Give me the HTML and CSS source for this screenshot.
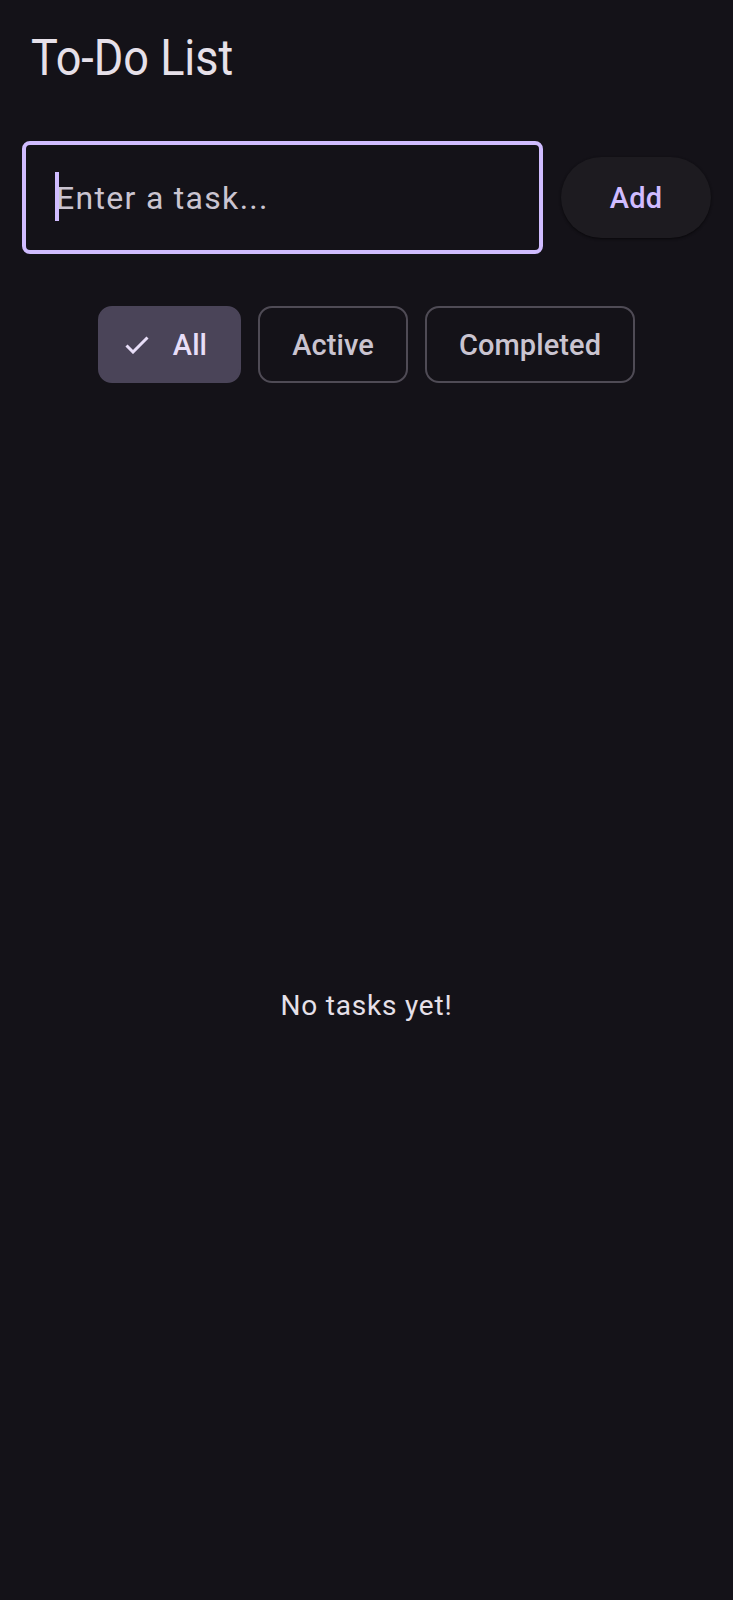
FILE: index.html
```html
<!DOCTYPE html>
<html lang="en">
<head>
<meta charset="utf-8">
<title>To-Do List</title>
<link rel="stylesheet" href="styles.css">
</head>
<body>
<main class="app">
  <h1 class="title">To-Do List</h1>
  <div class="entry">
    <div class="field">
      <span class="caret"></span>
      <span class="placeholder">Enter a task...</span>
    </div>
    <button class="add-btn" type="button">Add</button>
  </div>
  <div class="filters">
    <button class="chip chip--selected" type="button">
      <svg class="chip-check" viewBox="0 0 24 18" width="24" height="18" aria-hidden="true">
        <polyline points="1.5,9.5 8,16 22.5,1.5" fill="none" stroke="#e8def8" stroke-width="3"/>
      </svg>
      <span>All</span>
    </button>
    <button class="chip" type="button">Active</button>
    <button class="chip" type="button">Completed</button>
  </div>
  <section class="empty">
    <p class="empty-text">No tasks yet!</p>
  </section>
</main>
</body>
</html>
```
FILE: styles.css
```css
* {
  box-sizing: border-box;
}

html, body {
  margin: 0;
  padding: 0;
  background: #141218;
}

body {
  font-family: Roboto, "Noto Sans", sans-serif;
  color: #e6e0e9;
}

.app {
  min-height: 1600px;
  display: flex;
  flex-direction: column;
}

.title {
  margin: 28px 0 0 31px;
  font-size: 50px;
  font-weight: 400;
  line-height: 60px;
  color: #e6e0e9;
  transform: scaleX(0.9);
  transform-origin: left center;
}

.entry {
  margin-top: 53px;
  padding: 0 22px;
  display: flex;
  align-items: center;
  gap: 18px;
}

.field {
  position: relative;
  flex: 1;
  height: 113px;
  border: 4px solid #d0bcff;
  border-radius: 8px;
  padding-left: 30px;
  display: flex;
  align-items: center;
}

.caret {
  position: absolute;
  left: 29px;
  top: 27px;
  width: 4px;
  height: 49px;
  background: #d0bcff;
}

.placeholder {
  font-size: 32px;
  line-height: 48px;
  letter-spacing: 1.3px;
  color: #cac4d0;
}

.add-btn {
  width: 150px;
  height: 81px;
  border: none;
  border-radius: 41px;
  background: #1d1b20;
  box-shadow: 0 1px 3px rgba(0, 0, 0, 0.35), 0 1px 2px rgba(0, 0, 0, 0.25);
  color: #d0bcff;
  font-family: inherit;
  font-size: 29px;
  font-weight: 500;
  letter-spacing: 0.2px;
  padding: 0;
}

.filters {
  margin-top: 52px;
  display: flex;
  justify-content: center;
  gap: 17px;
}

.chip {
  height: 77px;
  padding: 0 32px;
  border: 2px solid #4f4b55;
  border-radius: 14px;
  background: transparent;
  color: #cac4d0;
  font-family: inherit;
  font-size: 29px;
  font-weight: 500;
  letter-spacing: 0.1px;
  display: flex;
  align-items: center;
}

.chip--selected {
  background: #4a4458;
  border-color: #4a4458;
  color: #e8def8;
  padding: 0 32px 0 25px;
  gap: 24px;
}

.chip-check {
  display: block;
  flex: none;
}

.empty {
  flex: 1;
  margin-top: 28px;
  display: flex;
  align-items: center;
  justify-content: center;
}

.empty-text {
  margin: 0;
  font-size: 28px;
  line-height: 40px;
  letter-spacing: 0.8px;
  color: #e6e0e9;
}
```
